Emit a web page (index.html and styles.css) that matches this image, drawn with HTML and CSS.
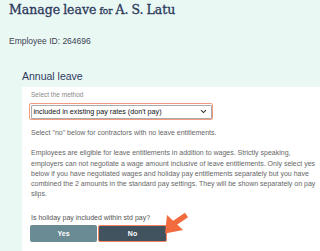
FILE: index.html
```html
<!DOCTYPE html>
<html>
<head>
<meta charset="utf-8">
<link rel="stylesheet" href="styles.css">
</head>
<body>
<div class="page">
  <h1 class="title">Manage leave <span class="for">for</span> A. S. Latu</h1>
  <div class="emp">Employee ID: 264696</div>
  <h2 class="section">Annual leave</h2>
  <div class="panel">
    <div class="label">Select the method</div>
    <div class="select-ring">
      <div class="select">
        <span>included in existing pay rates (don't pay)</span>
        <svg class="chev" width="7" height="5" viewBox="0 0 7 5"><path d="M1 1.2 L3.5 3.6 L6 1.2" fill="none" stroke="#333" stroke-width="1.1"/></svg>
      </div>
    </div>
    <p class="note">Select "no" below for contractors with no leave entitlements.</p>
    <p class="para">Employees are eligible for leave entitlements in addition to wages. Strictly speaking, employers can not negotiate a wage amount inclusive of leave entitlements. Only select yes below if you have negotiated wages and holiday pay entitlements separately but you have combined the 2 amounts in the standard pay settings. They will be shown separately on pay slips.</p>
    <p class="question">Is holiday pay included within std pay?</p>
    <div class="buttons">
      <div class="btn yes">Yes</div>
      <div class="btn no">No</div>
      <svg class="arrow" width="30" height="30" viewBox="0 0 30 30">
        <path d="M14 14.5 L26.5 6" stroke="#f26b3f" stroke-width="5.5" stroke-linecap="butt"/>
        <path d="M5 24.5 L7 6 L23 21 Z" fill="#f26b3f"/>
      </svg>
    </div>
  </div>
</div>
</body>
</html>
```
FILE: styles.css
```css
html, body {
  margin: 0;
  padding: 0;
  background: #eaf8f4;
  height: 100%;
}
.page {
  padding: 2px 0 0 9px;
  font-family: "Liberation Sans", Arial, sans-serif;
  min-height: 100%;
  box-sizing: border-box;
  display: flex;
  flex-direction: column;
}
.title {
  margin: 0;
  font-family: "DejaVu Serif", serif;
  font-weight: normal;
  font-size: 12.5px;
  line-height: 15px;
  color: #2e3a5c;
  -webkit-text-stroke: 0.35px #2e3a5c;
  word-spacing: -1px;
}
.title .for {
  font-size: 9px;
}
.emp {
  margin-top: 17px;
  font-size: 8.5px;
  line-height: 10px;
  color: #3b4152;
}
.section {
  margin: 24px 0 0 13px;
  font-weight: normal;
  font-size: 10.5px;
  line-height: 12px;
  color: #2e3a5c;
}
.panel {
  margin: 5px 0 0 13px;
  background: #fff;
  flex: 1;
  padding: 3px 3px 10px 9px;
}
.label {
  font-size: 6.5px;
  line-height: 9px;
  color: #888;
}
.select-ring {
  margin: 4px 0 0 -2px;
  width: 184px;
  box-sizing: border-box;
  border: 1.5px solid #f59a7e;
  border-radius: 2px;
  padding: 0.5px;
}
.select {
  display: flex;
  align-items: center;
  justify-content: space-between;
  height: 14px;
  box-sizing: border-box;
  border: 1px solid #aaa;
  border-radius: 1px;
  padding: 0 4px 0 2px;
  font-size: 7.2px;
  color: #111;
}
.note {
  margin: 8px 0 0;
  font-size: 7px;
  line-height: 10.3px;
  color: #666;
}
.para {
  margin: 10px 0 0;
  font-size: 7px;
  line-height: 10.3px;
  color: #666;
}
.question {
  margin: 13.5px 0 0;
  font-size: 7px;
  line-height: 9px;
  color: #555;
}
.buttons {
  position: relative;
  display: flex;
  margin: 2.5px 0 0 -1px;
}
.btn {
  height: 17px;
  display: flex;
  align-items: center;
  justify-content: center;
  font-size: 7px;
  font-weight: bold;
  color: #fff;
  border-radius: 2px;
  box-sizing: border-box;
}
.yes {
  width: 67px;
  background: #6b8b94;
}
.no {
  width: 69px;
  margin-left: 1px;
  background: #40535f;
  border: 1px solid #f4845f;
}
.arrow {
  position: absolute;
  left: 130px;
  top: -16px;
}
```
